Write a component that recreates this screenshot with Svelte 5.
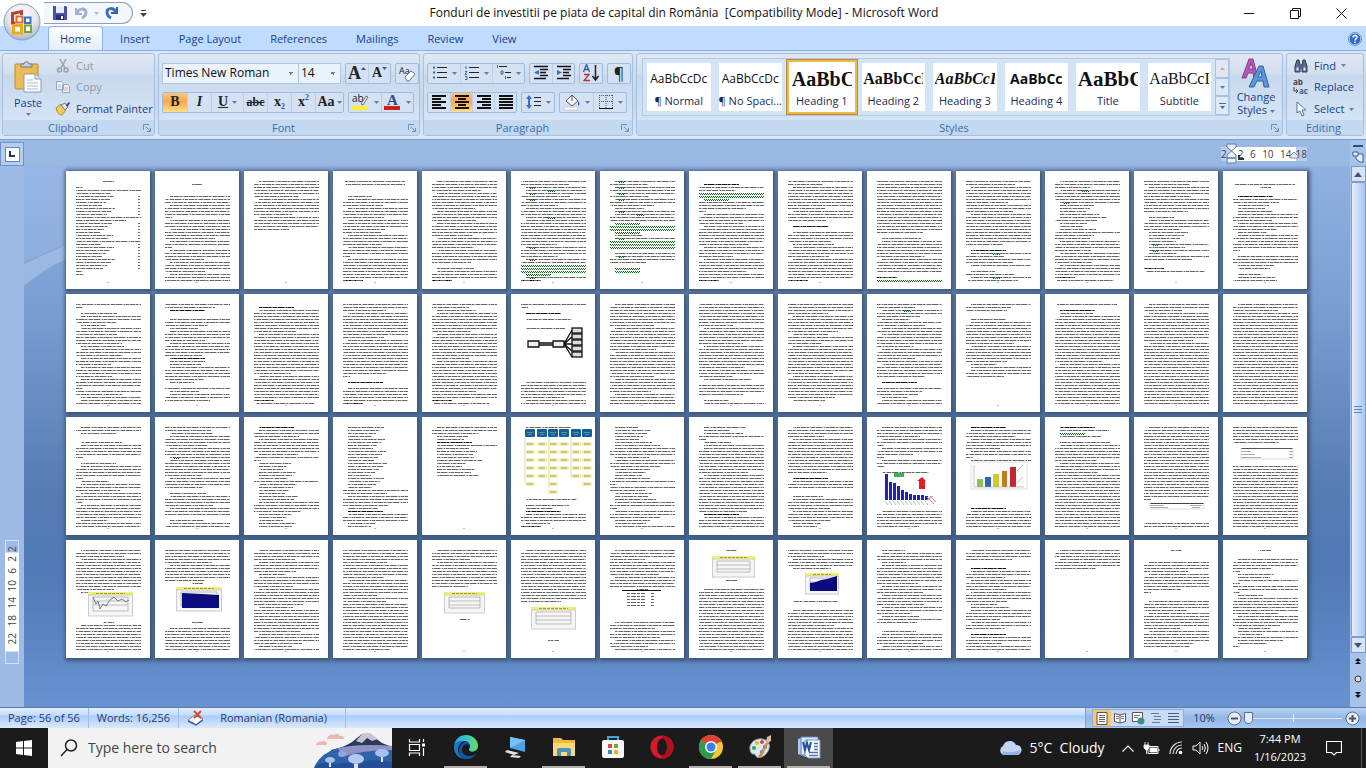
<script>
  let tab = $state('Home');
  let style = $state('Heading 1');
  let font = $state('Times New Roman');
  let size = $state('14');
  let zoom = $state(10);

  const tabs = ['Home', 'Insert', 'Page Layout', 'References', 'Mailings', 'Review', 'View'];

  const styles = [
    { name: 'Normal', mark: '¶ ', sample: 'AaBbCcDc', kind: 'sans' },
    { name: 'No Spaci...', mark: '¶ ', sample: 'AaBbCcDc', kind: 'sans' },
    { name: 'Heading 1', sample: 'AaBbC', kind: 'h1' },
    { name: 'Heading 2', sample: 'AaBbCcI', kind: 'h2' },
    { name: 'Heading 3', sample: 'AaBbCcI', kind: 'h3' },
    { name: 'Heading 4', sample: 'AaBbCc', kind: 'h4' },
    { name: 'Title', sample: 'AaBbC', kind: 'title' },
    { name: 'Subtitle', sample: 'AaBbCcI', kind: 'subtitle' },
  ];

  // One letter per text line:
  // f full, i indented, s short, t stub, m indented short, n list item, b bold heading,
  // c centred, d centred short, o contents entry, g/h wavy underline, u/v line with wavy word, r/k footnote
  const pages = [
    'd.tfsooooooofsoooooofooooooooott',
    '.d...iffiffftiffiffsiftiffsiffsiff',
    'iffffsiffffsifffs',
    'cc...nifsiffsiffssiffsifftiffffffrk',
    'iffsiffffsiffsifffsiffsifffs.niffrk',
    'fsuvusufsiffvifffffffsuffsufggghurk',
    'usufusufsnuvffhgghnuggg.iufs.hh',
    '.bfsgghffstiffsifffffsiffsifffsffrk',
    'fsiffffffsiffs.b.iffsmiffsiffffffrk',
    'fffffffffffffffffs.miffffsiffff.rgk',
    'fsiffffsffsifffffffffs.bvsfsi.nsvkk',
    'ifsvfffunnnnmsnnnfssiffsiffsifffrk',
    'fsiffsffffs.niffsnnnnununfs..rk',
    '.cd..bfsnnmifsifsnififft.iffnn.nnsrk',
    'ft.mifsnifsffsmifsifsiffsifftfsiifs',
    'fsb..ifsniffsifffsbnnifffsn.fnifs..rk',
    '.biffffffsiffffffffffffsifffffffrkk',
    'ffsifffffffsiffffffffffst.b.iffffrk',
    'fsnifffffsifffffffsifffffffffsffrk',
    'ft.b.m..n.................iffffsiffffrk',
    'iffffffsiffffffsifffffffsifffsifffffff',
    'fffffffsiffffsiffffffsffsm.fffs.nifffrk',
    'fffsiffffsnffsiffffffffsiffffffsn..frk',
    'fsvfsnfsififffsiffsfifffs.b.fssniffrg',
    'iss..niffffffsiffffsniifs',
    'c.bniffffffffffffffsiffffffffffffff',
    'ifsiffffffffsiffffffffffffffffffff',
    'ifsfffffffffffffffffffffffffffffff',
    'ifm..miffft.niffftnifsifftiffffnffsiff',
    'fsmiffsiffuiffffsiffs.niffsiff.niffsnrk',
    'bifsiffffmftnnnnnnfnnnnnniffsnnnnnnnnn',
    'nnnnnnnnnnnnnnnnnnnnnfsiffsnbiffnnm',
    'ifsnnbinmmnmnnnnm',
    'm.......................m.mnbiffnrk',
    'nnnnnnmiffnifsnnnmftfsnnmiftifsnniff',
    'mnnftniifffffffsifffffffffffsbiffffff',
    'iffsiffffffffffs.biff..niffsiffsnnrk',
    'iffsiftifstift.m............iffffs',
    'bifsiffsifti...............bifffffsnnn',
    'bmhm.miffffsiffsffffffffffffffffff',
    'iffffffffffffffffffffffft.......ffff',
    'fffffs.......ffffffffffffffffffffff',
    'ifsifffffffffsm.........diffffffffff',
    'ffffsiffffsd............d.ifffffffff',
    'iffsiffsniffsiffffsnfffffffsiffsnfff',
    'ffffsffffsiffffsfsfffffffffffffffs',
    'iffsifffffffs..........d',
    'iffffffffffffffffs.d..........d',
    'iffsffffsifffd..........ifsifsifsinfn',
    'd.........d..iffffffffffffffffffff',
    'ffsiffm..........m..iffffsffffffff',
    'niffnifffffsifsiffsifsnfs..niffsiff',
    'iffs..bifsiffsiffsnniffsifs.bifsffsiffs',
    'iffiffs',
    'd...iffsiffffst..iffsiffffsifffss',
    'd..iffstnnitfitniffffsiffsninfmnt',
  ];

  const figures = {
    19: 'tree', 33: 'org', 37: 'bars', 38: 'columns', 40: 'sheetLow', 41: 'sheet', 42: 'wave',
    43: 'area', 46: 'gridMid', 47: 'gridLow', 48: 'table', 49: 'gridTop', 50: 'areaSmall',
  };

  const spans = {
    f: [10, 75], i: [15, 75], s: [10, 52], t: [10, 17], m: [15, 58], n: [15, 46], b: [15, 50],
    c: [12, 72], d: [37, 48], o: [10, 42], g: [10, 75], h: [15, 40], u: [15, 75], v: [15, 75],
    r: [10, 30], k: [12, 64],
  };

  function rows(text, page) {
    const out = [];
    text.slice(0, 34).split('').forEach((kind, i) => {
      if (kind === '.') return;
      const [x1, end] = spans[kind];
      const jitter = 'smnko'.includes(kind) ? ((page * 7 + i * 13) % 17) - 8 : 0;
      out.push({ kind, x1, x2: end + jitter, y: 10.5 + i * 3, seed: (page * 5 + i * 11) % 31 });
    });
    return out;
  }
</script>

{#snippet arrow()}
  <svg class="arrow" width="5" height="3" viewBox="0 0 5 3"><path d="M0 0h5L2.5 3z" /></svg>
{/snippet}

{#snippet launcher()}
  <button class="launcher" aria-label="More options">
    <svg width="8" height="8" viewBox="0 0 8 8"><path d="M.5 6V.5H6M3 3l4 4M7.5 4v3.5H4" fill="none" stroke="#6b8fc0" /></svg>
  </button>
{/snippet}

{#snippet lines(d)}
  <svg width="16" height="16" viewBox="0 0 16 16"><path {d} stroke="#111" stroke-width="2" fill="none" /></svg>
{/snippet}

{#snippet squiggle(x1, x2, y)}
  <path class="squiggle" d="M{x1} {y}H{x2}M{x1 + 1} {y + 1}H{x2}" />
{/snippet}

{#snippet chart(x, y, w, h)}
  <rect {x} {y} width={w} height="3" fill="#f2ee6a" />
  <path d="M{x + 8} {y + 1.5}h{w - 16}" stroke="#8a8640" stroke-width=".8" stroke-dasharray="3 1" />
  <rect x={x + 0.5} y={y + 3} width={w - 1} height={h - 3} fill="#f6f6f6" stroke="#ccc" />
  <path d="M{x + 5} {y + 5}v{h - 10}h{w - 10}v-{h - 10}zM{x + 5} {y + 9}h{w - 10}M{x + 5} {y + 13}h{w - 10}" fill="none" stroke="#999" stroke-width=".6" />
{/snippet}

{#snippet figure(kind)}
  {#if kind === 'tree'}
    <path d="M17 47h11v6H17zM42 47h11v6H42zM28 49h14M28 51h14M53 50L61 36M53 50L61 43M53 50h8M53 50L61 57M53 50L61 63" fill="#eee" stroke="#111" stroke-width="1.3" />
    {#each [34, 40, 46, 52, 58] as y}
      <rect x="61" {y} width="10" height="5" fill="#ddd" stroke="#111" stroke-width="1.3" />
    {/each}
  {:else if kind === 'org'}
    <path d="M14 20v45M38 20v52M60 20v40" stroke="#bbb" stroke-width=".6" />
    {#each [14, 26, 37, 48, 60, 71] as x, c}
      <rect {x} y="12" width="10" height="8" rx="1" fill="#155f92" />
      <path d="M{x + 2} 15.5h6M{x + 3} 17.5h4" stroke="#6fa3c7" stroke-width=".7" />
      {#each [0, 1, 2, 3, 4, 5, 6] as r}
        {#if r < 4 || (r === 4 && c !== 3) || (r === 5 && (c === 0 || c === 2 || c === 5)) || (r === 6 && c === 2)}
          <rect {x} y={25 + r * 8} width="10" height="4" fill="#f4efad" />
          <path d="M{x + 2} {27 + r * 8}h6" stroke="#8d8a58" stroke-width=".8" />
        {/if}
      {/each}
    {/each}
  {:else if kind === 'bars'}
    {#each [26, 18, 17, 14, 10, 8, 6, 5, 5, 5, 4] as h, n}
      <rect x={18 + n * 4} y={83 - h} width="3" height={h} fill="#2424b4" />
      <path d="M{18 + n * 4} 84l3 4" stroke="#999" stroke-width=".7" />
    {/each}
    <rect x="27" y="56" width="10" height="4" fill="#32b35c" />
    <path d="M50 64l5-4 4 4h-1v8h-6v-8z" fill="#e02020" />
    <path d="M60 80l7 7M63 79l6 6M60 83l6-4" stroke="#c88" />
  {:else if kind === 'columns'}
    <rect x="15" y="45" width="56" height="27" fill="#fcfcfc" stroke="#ccc" stroke-width=".6" />
    <rect x="21" y="62" width="6" height="8" fill="#8fc24f" /><rect x="29" y="60" width="6" height="10" fill="#2f65b5" />
    <rect x="37" y="57" width="6" height="13" fill="#d8c52a" /><rect x="46" y="54" width="5" height="16" fill="#c07c22" />
    <rect x="54" y="50" width="6" height="20" fill="#c52530" />
    <path d="M18 48v22h50M61 54l6-6M61 66l6-6" stroke="#aaa" stroke-width=".6" fill="none" />
  {:else if kind === 'sheetLow'}
    <path d="M16 86.5h54" stroke="#444" /><path d="M16 88.5h14M16 90.5h18M56 88.5h12M58 90.5h8" stroke="#aaa" />
    <path d="M16 86v6h54v-6" fill="none" stroke="#ddd" />
  {:else if kind === 'sheet'}
    <path d="M18 31.5h52" stroke="#555" /><path d="M18 34.5h10M18 37.5h14M18 40.5h20M66 34.5h4M66 37.5h4M66 40.5h4" stroke="#aaa" />
    <path d="M18 31v11h52v-11" fill="none" stroke="#ddd" />
  {:else if kind === 'wave'}
    {@render chart(22, 52, 45, 24)}
    <path d="M27 57l3 7 2-3 2 8 3-5 3 2 4-6 4-3 4 4 4-2 4 3 3-2" fill="none" stroke="#6b7a94" />
  {:else if kind === 'area'}
    {@render chart(21, 47, 46, 24)}
    <path d="M27 53l20 1 17 1v13H27z" fill="#0b0b80" />
  {:else if kind === 'areaSmall'}
    {@render chart(27, 33, 34, 21)}
    <path d="M32 43l6-1 5-2 6-1 10-3v15H32z" fill="#0b0b80" />
  {:else if kind === 'gridMid'}
    {@render chart(22, 52, 41, 21)}
  {:else if kind === 'gridLow'}
    {@render chart(20, 67, 45, 22)}
  {:else if kind === 'gridTop'}
    {@render chart(23, 16, 43, 21)}
  {:else if kind === 'table'}
    <path d="M22 50.5h39" stroke="#111" />
    {#each [53.5, 56.5, 59.5, 62.5, 65.5] as y}
      <path d="M27 {y}h18M51 {y}h4" stroke="#666" stroke-dasharray="3 1 5 1" />
    {/each}
  {/if}
{/snippet}

<div class="window">
  <header class="titlebar">
    <button class="orb" aria-label="Office Button">
      <svg width="40" height="40" viewBox="0 0 40 40">
        <defs>
          <radialGradient id="orb" cx=".5" cy=".3" r=".7"><stop offset="0" stop-color="#fff" /><stop offset=".6" stop-color="#e3e6ec" /><stop offset="1" stop-color="#aab4c4" /></radialGradient>
        </defs>
        <circle cx="19" cy="19" r="18" fill="url(#orb)" stroke="#8c9db8" />
        <path d="M12.5 20H9.500V10.500L18.500 8.500V12" fill="none" stroke="#c0412a" stroke-width="3" />
        <path d="M13.500 13.500h6v6h-6z" fill="#fff" stroke="#de6a2c" stroke-width="2" />
        <path d="M22 14.500h5.500V20H22z" fill="#fff" stroke="#3a76b8" stroke-width="2" />
        <path d="M10.500 22.500h8v7.500h-8z" fill="#fff" stroke="#f0a91e" stroke-width="3" />
        <path d="M22 22.500h6V29h-6z" fill="#fff" stroke="#7aa33a" stroke-width="2" />
      </svg>
    </button>
    <div class="quick">
      <button aria-label="Save"><svg width="16" height="16" viewBox="0 0 16 16"><path d="M1 1h13l1 1v13H1z" fill="#4a52a8" /><path d="M4 1h8v7H4z" fill="#e8ecfb" /><path d="M4 10h8v5H4z" fill="#2b3078" /><path d="M9 11h2v3H9z" fill="#fff" /></svg></button>
      <button aria-label="Undo"><svg width="16" height="16" viewBox="0 0 16 16"><path d="M3 3v6h6" fill="none" stroke="#a3b2cc" stroke-width="2" /><path d="M4 8c2-5 8-5 9-1 0 3-2 5-4 6" fill="none" stroke="#a3b2cc" stroke-width="3" /></svg></button>
      <span class="faint">{@render arrow()}</span>
      <button aria-label="Redo"><svg width="16" height="16" viewBox="0 0 16 16"><path d="M13 2v6H7" fill="none" stroke="#2f62ad" stroke-width="2" /><path d="M12 7C9 2 3 3 3 7c0 3 2 5 4 6" fill="none" stroke="#3c6fb6" stroke-width="3" /></svg></button>
    </div>
    <button class="customize" aria-label="Customize Quick Access Toolbar"><svg width="7" height="7" viewBox="0 0 7 7"><path d="M1 0h5v1H1zM0 3h7L3.500 7z" fill="#444" /></svg></button>
    <h1>Fonduri de investitii pe piata de capital din România&nbsp; [Compatibility Mode] - Microsoft Word</h1>
    <div class="controls">
      <button aria-label="Minimize"><svg width="11" height="11" viewBox="0 0 11 11"><path d="M0 5.500h10" stroke="#111" /></svg></button>
      <button aria-label="Restore"><svg width="11" height="11" viewBox="0 0 11 11"><path d="M.5 2.500h8v8h-8zM2.500 2.500v-2h8v8h-2" fill="none" stroke="#111" /></svg></button>
      <button aria-label="Close"><svg width="11" height="11" viewBox="0 0 11 11"><path d="M.5.5l10 10M10.500.5l-10 10" stroke="#111" /></svg></button>
    </div>
  </header>

  <nav class="tabs">
    {#each tabs as name}
      <button class:active={tab === name} onclick={() => (tab = name)}>{name}</button>
    {/each}
    <button class="help" aria-label="Help">
      <svg width="14" height="14" viewBox="0 0 14 14"><circle cx="7" cy="7" r="6" fill="#2e6bc4" stroke="#dbe8fb" /><circle cx="7" cy="7" r="6.500" fill="none" stroke="#4a7cc0" stroke-width=".8" /><path d="M5 5.500c0-3 4.500-2.500 4 0-.3 1.300-2 1.300-2 3M7 9.500v1.500" stroke="#fff" stroke-width="1.500" fill="none" /></svg>
    </button>
  </nav>

  <div class="ribbon">
    <section class="group clipboard">
      <div class="body">
        <button class="paste">
          <svg width="28" height="32" viewBox="0 0 28 32">
            <rect x="1" y="3" width="23" height="25" rx="1" fill="#e9bc57" stroke="#b98a35" />
            <path d="M7 6V3h3c0-3 5-3 5 0h3v3z" fill="#c9d0da" stroke="#6c7686" />
            <path d="M10 13h11l6 5v13H10z" fill="#fff" stroke="#8c9bb5" /><path d="M21 13v5h6" fill="#dfe7f3" stroke="#8c9bb5" />
            <path d="M13 19h6M13 22h11M13 25h11M13 28h11" stroke="#a9b8d2" />
          </svg>
          <span>Paste</span>
          {@render arrow()}
        </button>
        <div class="stack">
          <button disabled><svg width="16" height="16" viewBox="0 0 16 16"><path d="M5 1l5 9M11 1L6 10" stroke="#9aa0aa" stroke-width="1.500" /><circle cx="4.500" cy="12" r="2" fill="none" stroke="#9aa0aa" stroke-width="1.500" /><circle cx="11" cy="12" r="2" fill="none" stroke="#9aa0aa" stroke-width="1.500" /></svg>Cut</button>
          <button disabled><svg width="16" height="16" viewBox="0 0 16 16"><path d="M1.500 2.500h5l2 2v6h-7zM7.500 5.500h5l2 2v6h-7z" fill="#eef1f6" stroke="#9aa6b8" /><path d="M9 9h4M9 11h4M3 6h3M3 8h3" stroke="#b4bccb" /></svg>Copy</button>
          <button><svg width="16" height="16" viewBox="0 0 16 16"><path d="M1 7l5-4 5 6-4 5c-3 0-4-1-6-7z" fill="#f1cb5a" stroke="#b68a2c" /><path d="M6 4l4 5 3-3-3-4z" fill="#dfe5ee" stroke="#707c90" /><path d="M11 4l3-3 1 1-3 4z" fill="#34436a" /></svg>Format Painter</button>
        </div>
      </div>
      <footer><span>Clipboard</span>{@render launcher()}</footer>
    </section>

    <section class="group font">
      <div class="body rows">
        <div class="row">
          <div class="combos">
            <select class="family" aria-label="Font" bind:value={font}><option>Times New Roman</option><option>Calibri</option></select>
            <select class="size" aria-label="Font size" bind:value={size}><option>14</option><option>12</option></select>
          </div>
          <div class="set">
            <button class="serif big" aria-label="Grow Font">A<svg width="5" height="3" viewBox="0 0 5 3"><path d="M0 3h5L2.500 0z" fill="#2f57a6" /></svg></button>
            <button class="serif" aria-label="Shrink Font">A<svg width="5" height="3" viewBox="0 0 5 3"><path d="M0 0h5L2.500 3z" fill="#2f57a6" /></svg></button>
          </div>
          <div class="set">
            <button aria-label="Clear Formatting"><svg width="18" height="17" viewBox="0 0 18 17"><text x="1" y="9" font-size="9" fill="#222">Aa</text><path d="M7 12l6-6 4 3-6 7H9z" fill="#fff" stroke="#67748c" /></svg></button>
          </div>
        </div>
        <div class="row">
          <div class="set">
            <button class="serif on wide"><b>B</b></button>
            <button class="serif wide"><i>I</i></button>
            <button class="serif drop"><u>U</u>{@render arrow()}</button>
            <button class="serif wide small"><s>abc</s></button>
            <button class="serif wide">x<sub>2</sub></button>
            <button class="serif wide">x<sup>2</sup></button>
            <button class="serif drop tight">Aa{@render arrow()}</button>
          </div>
          <div class="set">
            <button class="drop" aria-label="Highlight"><svg width="18" height="18" viewBox="0 0 18 18"><text x="0" y="9" font-size="10" fill="#222">ab</text><path d="M9 11l5-8 2 1-5 8z" fill="#e8edf5" stroke="#555" stroke-width=".8" /><path d="M0 13h16v4H0z" fill="#ffee2e" /></svg>{@render arrow()}</button>
            <button class="drop" aria-label="Font Color"><svg width="18" height="18" viewBox="0 0 18 18"><text class="tserif" x="3" y="12" font-size="15" font-weight="bold" fill="#2c4a8a">A</text><path d="M0 13h16v4H0z" fill="#d11d1d" /></svg>{@render arrow()}</button>
          </div>
        </div>
      </div>
      <footer><span>Font</span>{@render launcher()}</footer>
    </section>

    <section class="group paragraph">
      <div class="body rows">
        <div class="row">
          <div class="set">
            <button class="drop" aria-label="Bullets"><svg width="16" height="16" viewBox="0 0 16 16"><path d="M1 2.500h2M1 7.500h2M1 12.500h2" stroke="#3e62a8" stroke-width="2" /><path d="M5 2.500h10M5 7.500h10M5 12.500h10" stroke="#222" /></svg>{@render arrow()}</button>
            <button class="drop" aria-label="Numbering"><svg width="16" height="16" viewBox="0 0 16 16"><path d="M2 1v3M1 6.500h2l-2 3h2M1 11.500h2v3H1" stroke="#3e62a8" fill="none" /><path d="M5 2.500h10M5 7.500h10M5 12.500h10" stroke="#222" /></svg>{@render arrow()}</button>
            <button class="drop" aria-label="Multilevel List"><svg width="16" height="16" viewBox="0 0 16 16"><path d="M1.500 0v3M5 6h2v3H5zM9.500 11v3" stroke="#3e62a8" fill="none" /><path d="M3 1.500h8M9 7.500h6M11 12.500h4" stroke="#222" /></svg>{@render arrow()}</button>
          </div>
          <div class="set">
            <button aria-label="Decrease Indent"><svg width="16" height="16" viewBox="0 0 16 16"><path d="M1 1.500h14M7 4.500h8M7 7.500h6M7 10.500h8M1 13.500h12" stroke="#111" stroke-width="1.500" /><path d="M6 5v5L1 7.500z" fill="#3e6cc4" /></svg></button>
            <button aria-label="Increase Indent"><svg width="16" height="16" viewBox="0 0 16 16"><path d="M1 1.500h14M7 4.500h8M7 7.500h6M7 10.500h8M1 13.500h12" stroke="#111" stroke-width="1.500" /><path d="M1 5v5l5-2.500z" fill="#3e6cc4" /></svg></button>
          </div>
          <div class="set">
            <button aria-label="Sort"><svg width="18" height="18" viewBox="0 0 18 18"><path d="M1.500 8L4.500.5 7.500 8M2.500 5.500h4" fill="none" stroke="#2f57a6" stroke-width="1.300" /><path d="M2 10.500h5L2 16.500h6" fill="none" stroke="#b5302f" stroke-width="1.300" /><path d="M13.500 1v14M10.500 12l3 4 3-4" stroke="#222" stroke-width="1.500" fill="none" /></svg></button>
          </div>
          <div class="set"><button class="pil" aria-label="Show marks">¶</button></div>
        </div>
        <div class="row">
          <div class="set">
            <button aria-label="Align Left">{@render lines('M1 2h14M1 5h9M1 8h14M1 11h9M1 14h14')}</button>
            <button class="on" aria-label="Center">{@render lines('M1 2h14M4 5h8M1 8h14M4 11h8M1 14h14')}</button>
            <button aria-label="Align Right">{@render lines('M1 2h14M6 5h9M1 8h14M6 11h9M1 14h14')}</button>
            <button aria-label="Justify">{@render lines('M1 2h14M1 5h14M1 8h14M1 11h14M1 14h14')}</button>
          </div>
          <div class="set">
            <button class="drop" aria-label="Line Spacing"><svg width="16" height="16" viewBox="0 0 16 16"><path d="M0 5l3-4 3 4zM0 11l3 4 3-4zM2 5h2v6H2z" fill="#3e6cc4" /><path d="M8 3.500h7M8 7.500h7M8 11.500h7" stroke="#222" /></svg>{@render arrow()}</button>
          </div>
          <div class="set">
            <button class="drop wider" aria-label="Shading"><svg width="18" height="18" viewBox="0 0 18 18"><path d="M3 8l6-6 6 6-6 5z" fill="#f3f6fb" stroke="#555" /><path d="M9 2v6" stroke="#555" /><path d="M15 8c2 2 2 4 0 5z" fill="#2f57a6" /><path d="M1 14h14v3H1z" fill="#fff" stroke="#ccc" /></svg>{@render arrow()}</button>
            <button class="drop wider" aria-label="Borders"><svg width="16" height="16" viewBox="0 0 16 16"><path d="M1.500 1v13M14.500 1v13M8 1v13M1 1.500h14M1 7.500h14" stroke="#556" stroke-dasharray="1 1" /><path d="M1 14.500h14" stroke="#111" /></svg>{@render arrow()}</button>
          </div>
        </div>
      </div>
      <footer><span>Paragraph</span>{@render launcher()}</footer>
    </section>

    <section class="group styles">
      <div class="body">
        <div class="gallery">
          {#each styles as s}
            <button class="card" class:picked={style === s.name} onclick={() => (style = s.name)}>
              <span class="sample {s.kind}">{s.sample}</span>
              <span class="name">{s.mark ?? ''}{s.name}</span>
            </button>
          {/each}
          <div class="scroller">
            <button class="off" aria-label="Previous row"><svg width="5" height="3" viewBox="0 0 5 3"><path d="M0 3h5L2.500 0z" fill="#a9b4c6" /></svg></button>
            <button aria-label="Next row">{@render arrow()}</button>
            <button aria-label="More styles"><svg width="7" height="6" viewBox="0 0 7 6"><path d="M0 0h7v1H0zM1 3h5L3.500 6z" fill="#4b6998" /></svg></button>
          </div>
        </div>
        <button class="change">
          <svg width="30" height="30" viewBox="0 0 30 30"><path d="M1 20L8 1h4l5 19h-4l-1-5H7l-2 5zM8 11h4L10 5z" fill="#b558b4" stroke="#8d3c90" /><path d="M8 29L18 8h4l6 21h-5l-1-6h-6l-3 6zM17 19h4l-1-6z" fill="#5d95d8" stroke="#2e62a5" /></svg>
          <span>Change<br />Styles {@render arrow()}</span>
        </button>
      </div>
      <footer><span>Styles</span>{@render launcher()}</footer>
    </section>

    <section class="group editing">
      <div class="body">
        <div class="stack">
          <button><svg width="16" height="16" viewBox="0 0 16 16"><path d="M2 8l2-6h2l1 5h2l1-5h2l2 6v6H9v-4H7v4H2z" fill="#5a6b8c" stroke="#2d3d60" /><path d="M3.500 9.500h2v3h-2zM10.500 9.500h2v3h-2z" fill="#dbe5f5" /></svg>Find {@render arrow()}</button>
          <button><svg width="16" height="16" viewBox="0 0 16 16"><text x="0" y="6" font-size="8" font-weight="bold" fill="#444">ab</text><text x="6" y="15" font-size="8" font-weight="bold" fill="#3a5f8c">ac</text><path d="M1 8v4h4M3 10l2 2-2 2" stroke="#444" fill="none" /></svg>Replace</button>
          <button><svg width="16" height="16" viewBox="0 0 16 16"><path d="M4 1v11l3-2 2 5 2-1-2-5h4z" fill="#fff" stroke="#556b90" /></svg>Select {@render arrow()}</button>
        </div>
      </div>
      <footer><span>Editing</span></footer>
    </section>
  </div>

  <main class="workspace">
    <div class="side">
      <button class="corner" aria-label="Tab selector"><span><svg width="6" height="6" viewBox="0 0 6 6"><path d="M1 0v5h5" fill="none" stroke="#1f3864" stroke-width="2" /></svg></span></button>
      <div class="vruler">
        <span class="edge">2</span>
        <div class="white"><span>2</span><span>6</span><span>10</span><span>14</span><span>18</span><span>22</span></div>
        <span class="edge"></span>
      </div>
    </div>

    <div class="center">
      <div class="hruler">
        <div class="scale">
          <span>2</span><span class="white"><span>2</span><span>6</span><span>10</span><span>14</span></span><span>18</span>
          <svg class="markers" width="86" height="22" viewBox="0 0 86 22"><path d="M6 1h9v3l-9 8v3h9v-3L6 4zM6 15h9v5H6z" fill="#eef3fb" stroke="#5e79a6" /><path d="M18 12v4h5" fill="none" stroke="#333" stroke-width="2" /><path d="M69 15v-2l4-4 4 4v2z" fill="#eef3fb" stroke="#7e8fae" /></svg>
        </div>
      </div>
      <div class="document">
        <svg class="swirl" width="42" height="160" viewBox="0 0 42 160" aria-hidden="true"><path d="M0 0h42v78L0 96z" fill="#a9c5ea" opacity=".3" /><path d="M0 98L42 79v14Q18 104 0 120z" fill="#c0d6f3" opacity=".4" /></svg>
        <div class="pages">
          {#each pages as text, p}
            <svg class="page" viewBox="0 0 84 118" role="img" aria-label="Page {p + 1}">
              {#each rows(text, p) as l}
                {#if l.kind === 'g' || l.kind === 'h'}
                  {@render squiggle(l.x1, l.x2, l.y)}
                {:else}
                  <path class="ink {l.kind}" d="M{l.x1} {l.y}H{l.x2}" />
                  <path class="text {l.kind}" d="M{l.x1} {l.y}H{l.x2}" stroke-dashoffset={l.seed} />
                  {#if l.kind === 'u'}
                    {@render squiggle(18, 25, l.y)}
                  {:else if l.kind === 'v'}
                    {@render squiggle(36, 44, l.y)}
                  {:else if l.kind === 'o'}
                    <path class="text" d="M72 {l.y}h2" />
                  {/if}
                {/if}
              {/each}
              {#if figures[p]}{@render figure(figures[p])}{/if}
              <path d="M41 111.500h2" stroke="#bbb" />
            </svg>
          {/each}
        </div>
      </div>
    </div>

    <div class="scrollbar">
      <span class="split"></span>
      <button class="toggle" aria-label="View Ruler"><svg width="12" height="12" viewBox="0 0 12 12"><path d="M1 1h5v4H1zM6 3h5v8H8l-4-3V5" fill="#e8effa" stroke="#3d5f94" /></svg></button>
      <button class="step" aria-label="Scroll up"><svg width="8" height="5" viewBox="0 0 8 5"><path d="M0 5h8L4 0z" fill="#3e5379" /></svg></button>
      <div class="thumb"><svg width="8" height="8" viewBox="0 0 8 8"><path d="M0 .5h8M0 3.500h8M0 6.500h8" stroke="#5f86c0" /></svg></div>
      <button class="step" aria-label="Scroll down"><svg width="8" height="5" viewBox="0 0 8 5"><path d="M0 0h8L4 5z" fill="#3e5379" /></svg></button>
      <button class="browse" aria-label="Previous page"><svg width="6" height="7" viewBox="0 0 6 7"><path d="M3 0l3 3H0zM3 3l3 3H0z" fill="#111" /></svg></button>
      <button class="browse" aria-label="Browse object"><svg width="8" height="8" viewBox="0 0 8 8"><circle cx="4" cy="4" r="3" fill="#ddd" stroke="#333" /></svg></button>
      <button class="browse" aria-label="Next page"><svg width="6" height="7" viewBox="0 0 6 7"><path d="M0 0h6L3 3zM0 3h6L3 6z" fill="#111" /></svg></button>
    </div>
  </main>

  <div class="status">
    <button class="cell">Page: 56 of 56</button>
    <button class="cell">Words: 16,256</button>
    <button class="cell lang">
      <svg width="17" height="16" viewBox="0 0 17 16"><path d="M1 10l7-5 8 4-7 6z" fill="#f7f9fd" stroke="#6a7fae" /><path d="M1 11l8 4 7-5" fill="none" stroke="#4660a0" stroke-width="1.500" /><path d="M7 1l7 7M14 1L7 8" stroke="#d9482e" stroke-width="2" /></svg>
      Romanian (Romania)
    </button>
    <div class="right">
      <div class="views">
        <button class="on" aria-label="Print Layout"><svg width="12" height="13" viewBox="0 0 12 13"><path d="M1 .5h10v12H1z" fill="#fff" stroke="#555" /><path d="M3 3.500h6M3 5.500h6M3 7.500h6M3 9.500h6" stroke="#666" /></svg></button>
        <button aria-label="Full Screen Reading"><svg width="12" height="12" viewBox="0 0 12 12"><path d="M.5 1.500L6 3l5.500-1.500v8L6 11 .5 9.500zM6 3v8" fill="#fff" stroke="#555" /><path d="M2 4.500h3M2 6.500h3M7 4.500h3M7 6.500h3" stroke="#777" /></svg></button>
        <button aria-label="Web Layout"><svg width="13" height="13" viewBox="0 0 13 13"><path d="M.5.5h10v9H.5z" fill="#fff" stroke="#555" /><path d="M2 3.500h6M2 5.500h4" stroke="#777" /><circle cx="9" cy="9" r="3.500" fill="#3f8d8d" /></svg></button>
        <button aria-label="Outline"><svg width="12" height="12" viewBox="0 0 12 12"><path d="M1 1.500h8M4 4.500h7M4 7.500h7M2 10.500h8" stroke="#667a9c" /></svg></button>
        <button aria-label="Draft"><svg width="12" height="12" viewBox="0 0 12 12"><path d="M0 1.500h11M0 4.500h11M0 7.500h11M0 10.500h11" stroke="#4c5d7c" /></svg></button>
      </div>
      <button class="percent">{zoom}%</button>
      <button class="round" aria-label="Zoom out"><svg width="15" height="15" viewBox="0 0 15 15"><circle cx="7.500" cy="7.500" r="6.500" fill="#e9eff8" stroke="#556b90" /><path d="M4 7.500h7" stroke="#44546f" stroke-width="2" /></svg></button>
      <input type="range" min="10" max="500" bind:value={zoom} aria-label="Zoom" />
      <button class="round" aria-label="Zoom in"><svg width="15" height="15" viewBox="0 0 15 15"><circle cx="7.500" cy="7.500" r="6.500" fill="#e9eff8" stroke="#556b90" /><path d="M4 7.500h7M7.500 4v7" stroke="#44546f" stroke-width="2" /></svg></button>
    </div>
  </div>

  <div class="taskbar">
    <button class="start" aria-label="Start"><svg width="16" height="16" viewBox="0 0 16 16"><path d="M0 2l7-1v6.500H0zM8 1l8-1v7.500H8zM0 8.500h7V15l-7-1zM8 8.500h8V16l-8-1z" fill="#fff" /></svg></button>
    <label class="search">
      <svg width="18" height="18" viewBox="0 0 18 18"><circle cx="11" cy="6.500" r="5.500" fill="none" stroke="#222" stroke-width="1.500" /><path d="M7 10.500L1 17" stroke="#222" stroke-width="1.500" /></svg>
      <input type="text" placeholder="Type here to search" aria-label="Type here to search" />
      <svg class="art" width="78" height="36" viewBox="0 0 78 36">
        <path d="M2 12q3-4 6-2 2-3 5 1v2H2zM13 6q3-5 7-3 4-3 6 1 4-1 4 3H13z" fill="#e9b9b6" />
        <path d="M17 18q14-3 21-8L48 2h8l12 9 10 4v12H20z" fill="#2b3957" />
        <path d="M42 9l7-8h7l8 6-6 2-5-3-5 5z" fill="#c9c4d6" />
        <path d="M0 36Q5 22 24 16q24-5 54-2v22z" fill="#2e62ab" />
        <path d="M24 16q24-5 54-2v4q-30 0-50 7z" fill="#8f92c4" />
        <path d="M0 36q8-8 20-4l40-4 18 2v6z" fill="#244f95" />
        <ellipse cx="42" cy="27" rx="8" ry="5" fill="#b3c9f2" /><ellipse cx="68" cy="21" rx="7" ry="4" fill="#a9c0ee" /><ellipse cx="16" cy="28" rx="5" ry="3" fill="#a9c0ee" /><ellipse cx="28" cy="22" rx="4" ry="3" fill="#8ea9dc" />
        <path d="M40 32h4v4h-4zM67 25h2v5h-2zM15 31h2v4h-2z" fill="#dce6fb" />
      </svg>
    </label>
    <button class="app" aria-label="Task View"><svg width="18" height="17" viewBox="0 0 18 17"><path d="M1.500 0v3h10V0M1.500 17v-3h10v3M1.500 5.500h10v6h-10z" fill="none" stroke="#fff" stroke-width="1.200" /><path d="M15.500 0v3M15.500 9v8" stroke="#fff" stroke-width="1.200" /><path d="M14 4.500h3v3h-3z" fill="#fff" /></svg></button>
    <button class="app open" aria-label="Edge">
      <svg width="26" height="26" viewBox="0 0 26 26">
        <defs>
          <linearGradient id="edge-top" x1="0" x2="1"><stop offset="0" stop-color="#2aa0e0" /><stop offset=".5" stop-color="#36c3d0" /><stop offset="1" stop-color="#6bdc5a" /></linearGradient>
        </defs>
        <path d="M1 12C2 4 8 1 13 1c8 0 12 6 12 11 0 6-8 7-9 4-.4-1 1-2 1-4 0-3-3-5-6-5C6 7 2 9 1 12z" fill="url(#edge-top)" />
        <path d="M1 12c1-3 5-5 10-5-6 3-8 9-4 14 2 3 5 4 8 4C6 26 0 19 1 12z" fill="#1b78cc" />
        <path d="M11 11c-4 4-2 11 5 11 3 0 5-1 7-2-5 8-16 6-17-3 0-4 2-8 7-9 2 0 4 2 4 4-2-2-4-2-6-1z" fill="#0f57a6" />
      </svg>
    </button>
    <button class="app" aria-label="Remote Desktop"><svg width="24" height="24" viewBox="0 0 24 24"><path d="M7 2l15 3v12L7 13z" fill="#4aa3e6" /><path d="M7 2l15 3-15 8z" fill="#78c2f5" /><path d="M4 15l12 3-5 2-9-3zM9 20l9 1-2 2-9-1z" fill="#dfe3e8" /></svg></button>
    <button class="app open" aria-label="File Explorer"><svg width="24" height="22" viewBox="0 0 24 22"><path d="M1 2h8l2 2h12v16H1z" fill="#f0b93a" /><path d="M1 7h22v13H1z" fill="#fbd978" /><path d="M5 20v-6q0-2 2-2h10q2 0 2 2v6h-4v-4H9v4z" fill="#4a93b8" /></svg></button>
    <button class="app" aria-label="Microsoft Store"><svg width="24" height="24" viewBox="0 0 24 24"><path d="M7 6V2h10v4" fill="none" stroke="#38a7dc" stroke-width="2" /><rect x="1" y="5" width="22" height="18" rx="2" fill="#f6f7f9" /><path d="M7 9h4v4H7z" fill="#d9512c" /><path d="M13 9h4v4h-4z" fill="#74a53a" /><path d="M7 15h4v4H7z" fill="#2f86cf" /><path d="M13 15h4v4h-4z" fill="#e8af24" /></svg></button>
    <button class="app" aria-label="Opera"><svg width="24" height="24" viewBox="0 0 24 24"><circle cx="12" cy="12" r="11.500" fill="#d8192a" /><path d="M12 .5a11.500 11.500 0 010 23z" fill="#b01020" /><ellipse cx="12" cy="12" rx="5" ry="8.500" fill="#1b1b1b" /></svg></button>
    <button class="app open" aria-label="Chrome"><svg width="24" height="24" viewBox="0 0 24 24"><circle cx="12" cy="12" r="12" fill="#f7c92e" /><path d="M12 12L1.600 6A12 12 0 0122.400 6z" fill="#dd4234" /><path d="M12 12L1.600 6A12 12 0 0012 24l5-9z" fill="#2c9c4c" /><path d="M12 6h10.400" stroke="#dd4234" stroke-width="2" /><circle cx="12" cy="12" r="6" fill="#fff" /><circle cx="12" cy="12" r="4.500" fill="#3c7fe8" /></svg></button>
    <button class="app open" aria-label="Paint"><svg width="24" height="24" viewBox="0 0 24 24"><path d="M2 14C1 8 8 3 14 4c7 1 9 7 6 12-4 7-11 8-12 5-1-4-5 1-6-7z" fill="#dbe7f3" stroke="#97aabf" /><circle cx="6" cy="13" r="2" fill="#37a04c" /><circle cx="9" cy="8" r="2" fill="#e8b622" /><circle cx="14" cy="7" r="2" fill="#d84832" /><circle cx="17" cy="12" r="2" fill="#6a4fb5" /><circle cx="14" cy="17" r="2" fill="#2e7fd1" /><path d="M10 22l9-16 2 1-8 16z" fill="#c98e4b" /><path d="M18 7l1-5 4-2v6l-3 2z" fill="#d9bb97" /></svg></button>
    <button class="app open current" aria-label="Word"><svg width="24" height="24" viewBox="0 0 24 24"><path d="M1 4l8-2v20l-8-3z" fill="#b6c9ea" /><path d="M4 2h17v18H4z" fill="#dfe9f8" stroke="#5c82c4" /><path d="M8 5h15v18H11l-3-3z" fill="#fff" stroke="#6f8fc8" /><path d="M17 8.500h4M17 11.500h4M17 14.500h4M12 17.500h9M12 20.500h9" stroke="#4a70b8" stroke-width="1.500" /><path d="M6 7l2 8 2-7 2 7 2-8" fill="none" stroke="#24509f" stroke-width="2" /></svg></button>
    <div class="tray">
      <button class="weather"><svg width="24" height="16" viewBox="0 0 24 16"><path d="M5 15a5 5 0 010-9 7 7 0 0113-1 5 5 0 011 10z" fill="#c3d4f2" /><path d="M5 15a4 4 0 010-4q8 3 17-1c1 3-1 5-3 5z" fill="#93b3e8" /></svg><span>5°C&nbsp; Cloudy</span></button>
      <button aria-label="Show hidden icons"><svg width="12" height="7" viewBox="0 0 12 7"><path d="M.5 6.500L6 1l5.500 5.500" fill="none" stroke="#fff" stroke-width="1.200" /></svg></button>
      <button aria-label="Battery"><svg width="17" height="13" viewBox="0 0 17 13"><path d="M5 4.500h10v7H5zM16 7v2" fill="none" stroke="#fff" /><path d="M7 6h7v4H7zM1 3h5v3L4 8H3L1 6zM2 0v3M5 0v3M3.500 8v4" fill="#fff" stroke="#fff" stroke-width=".8" /></svg></button>
      <button aria-label="Network"><svg width="14" height="14" viewBox="0 0 14 14"><path d="M1 13A12 12 0 0113 1M4 13a9 9 0 019-9M7 13a6 6 0 016-6" fill="none" stroke="#ddd" stroke-width="1.200" /><circle cx="11.500" cy="11.500" r="1.800" fill="#fff" /></svg></button>
      <button aria-label="Volume"><svg width="17" height="14" viewBox="0 0 17 14"><path d="M1 5h3l4-4v12L4 9H1zM10 5q2 2 0 4M12 3q3 4 0 8M14 1q4 6 0 12" fill="none" stroke="#fff" /></svg></button>
      <button class="eng">ENG</button>
      <button class="clock">7:44 PM<br />1/16/2023</button>
      <button class="note" aria-label="Notifications"><svg width="16" height="16" viewBox="0 0 16 16"><path d="M.5 1.500h15v11h-5L8 15l-2.500-2.500h-5z" fill="none" stroke="#fff" stroke-width="1.200" /></svg></button>
    </div>
  </div>
</div>

<style>
  :global(body) {
    margin: 0;
  }
  .window {
    min-height: 100vh;
    display: grid;
    grid-template-rows: 26px 24px 90px 1fr 21px 40px;
    font: 11px/16px 'Open Sans', 'Noto Sans', sans-serif;
    color: #15428b;
    background: #bfdbff;
    overflow: hidden;
  }
  button {
    font: inherit;
    color: inherit;
    border: 0;
    padding: 0;
    background: none;
    display: flex;
    align-items: center;
    justify-content: center;
    white-space: nowrap;
  }
  svg {
    display: block;
    flex: none;
  }
  .arrow {
    fill: #5d7fae;
  }

  .titlebar {
    position: relative;
    display: flex;
    align-items: center;
    padding-left: 44px;
    background: #fff;
  }
  .orb {
    position: absolute;
    left: 3px;
    top: 3px;
    z-index: 2;
  }
  .quick {
    display: flex;
    align-items: center;
    gap: 5px;
    height: 22px;
    padding: 0 12px 0 8px;
    border: 1px solid #8ba0bf;
    border-left: 0;
    border-radius: 0 12px 12px 0;
    box-sizing: border-box;
    background: #f4f8fe;
  }
  .faint {
    opacity: 0.5;
  }
  .customize {
    padding: 0 7px;
  }
  h1 {
    flex: 1;
    margin: 0;
    padding-right: 12px;
    font-size: 12px;
    font-weight: 400;
    color: #111;
    text-align: center;
    white-space: nowrap;
  }
  .controls {
    display: flex;
    padding-right: 2px;
  }
  .controls button {
    width: 46px;
    height: 26px;
  }

  .tabs {
    display: flex;
    align-items: stretch;
    padding-left: 48px;
  }
  .tabs button {
    padding: 0 11px;
    margin-right: 5px;
    border: 1px solid transparent;
    border-bottom: 0;
  }
  .tabs .active {
    background: linear-gradient(#fff, #e3edfa);
    border-color: #8db2e3;
    border-radius: 4px 4px 0 0;
  }
  .tabs .help {
    margin: 0 3px 0 auto;
    padding: 0;
  }

  .ribbon {
    display: flex;
    gap: 3px;
    padding: 2px 2px 3px;
    box-sizing: border-box;
    border-top: 1px solid #8db2e3;
    border-bottom: 1px solid #7ba0d0;
    background: linear-gradient(#dbe6f4, #cfdded 20%, #c7d8ed 60%, #d9e8f8);
  }
  .group {
    display: flex;
    flex-direction: column;
    box-sizing: border-box;
    border: 1px solid #a6c0e0;
    border-radius: 3px;
    background: linear-gradient(#dfe8f4, #d2deee 25%, #c9d9ed 26%, #d8e6f8);
  }
  .group .body {
    flex: 1;
    display: flex;
  }
  .group footer {
    display: flex;
    align-items: center;
    height: 15px;
    padding-right: 3px;
    background: #c2d9f0;
    color: #3e6aaa;
  }
  .group footer span {
    flex: 1;
    text-align: center;
  }
  .clipboard { width: 153px; }
  .font { width: 262px; }
  .paragraph { width: 210px; }
  .styles { flex: 1; min-width: 0; }
  .editing { width: 78px; }

  .paste {
    flex-direction: column;
    width: 50px;
    gap: 2px;
    padding-top: 2px;
  }
  .stack {
    display: flex;
    flex-direction: column;
    justify-content: space-around;
    padding: 1px 0 0;
  }
  .stack button {
    gap: 5px;
    justify-content: flex-start;
    height: 20px;
  }
  .stack button:disabled {
    color: #8d97a6;
  }
  .clipboard .stack { padding-left: 2px; }
  .editing .stack { padding-left: 6px; }

  .rows {
    flex-direction: column;
    justify-content: center;
    gap: 8px;
    padding: 1px 3px 0;
  }
  .row {
    display: flex;
    gap: 4px;
  }
  .combos {
    display: flex;
  }
  select {
    appearance: none;
    box-sizing: border-box;
    height: 21px;
    padding: 0 2px;
    border: 1px solid #b0c6e4;
    border-radius: 0;
    font: inherit;
    font-size: 12px;
    color: #111;
    background:
      linear-gradient(135deg, #5d7fae 50%, transparent 50%) right 4px center / 3px 3px no-repeat,
      linear-gradient(225deg, #5d7fae 50%, transparent 50%) right 7px center / 3px 3px no-repeat,
      #eaf2fb;
  }
  .family { width: 137px; }
  .size { width: 43px; margin-left: -1px; }
  .set {
    display: flex;
    box-sizing: border-box;
    height: 21px;
    border: 1px solid #9ebbe0;
    border-radius: 2px;
    background: #d3e1f3;
  }
  .set button {
    width: 22px;
    color: #222;
  }
  .set button + button {
    border-left: 1px solid #bcd0ea;
  }
  .set .wide { width: 24px; }
  .set .drop { width: 32px; gap: 4px; }
  .set .tight { width: 28px; gap: 2px; }
  .set .wider { width: 33px; }
  .set .on {
    background: linear-gradient(#fbc880, #fba648 45%, #fde08c);
  }
  .serif {
    font: bold 14px/16px 'Liberation Serif', serif;
  }
  .serif > svg:not(.arrow) {
    align-self: flex-start;
    margin-top: 3px;
  }
  .set .small { font-size: 12px; }
  .set .big { font-size: 18px; }
  .tserif { font-family: 'Liberation Serif', serif; }
  .serif sup,
  .serif sub {
    font-size: 8px;
    line-height: 10px;
    color: #2f57a6;
  }
  .serif sup { align-self: flex-start; }
  .serif sub { align-self: flex-end; }
  .set .pil { font-size: 16px; }

  .styles .body {
    padding: 4px 4px 4px 5px;
    gap: 4px;
  }
  .gallery {
    flex: 1;
    display: flex;
    min-width: 0;
    box-sizing: border-box;
    border: 1px solid #b4c9e6;
    background: #d4e4f7;
    overflow: hidden;
  }
  .card {
    flex: 1 1 72px;
    min-width: 0;
    flex-direction: column;
    box-sizing: border-box;
    border: 4px solid transparent;
    background: #fff padding-box;
    color: #111;
  }
  .card.picked {
    border: 3px solid #f2b93c;
    outline: 1px solid #b98a45;
    outline-offset: -1px;
  }
  .sample {
    height: 28px;
    max-width: 60px;
    line-height: 28px;
    overflow: hidden;
  }
  .card .name { color: #1b2a55; }
  .sans { font-size: 12px; }
  .h1, .h2, .h3, .title, .subtitle { font-family: 'Liberation Serif', serif; }
  .h1 { font-size: 20px; font-weight: 700; }
  .h2 { font-size: 16px; font-weight: 700; }
  .h3 { font-size: 16px; font-weight: 700; font-style: italic; }
  .h4 { font-size: 14px; font-weight: 700; }
  .title { font-size: 21px; font-weight: 700; }
  .subtitle { font-size: 16px; }
  .scroller {
    display: flex;
    flex-direction: column;
    width: 14px;
  }
  .scroller button {
    flex: 1;
    border: 1px solid #a9c3e6;
    background: #dbe9f9;
  }
  .scroller .off { background: #e4e8ee; }
  .change {
    width: 44px;
    flex-direction: column;
    line-height: 13px;
    gap: 2px;
  }
  .change .arrow,
  .stack .arrow {
    display: inline-block;
    vertical-align: middle;
  }

  .workspace {
    display: grid;
    grid-template-columns: 24px 1fr 16px;
  }
  .side {
    display: flex;
    flex-direction: column;
    background: #9dbbe4;
  }
  .corner {
    width: 24px;
    height: 24px;
    margin-top: 2px;
    border: 1px solid #6f92cc;
    background: #b6cdee;
  }
  .corner span {
    display: flex;
    align-items: center;
    justify-content: center;
    width: 13px;
    height: 13px;
    border: 1px solid #6384bc;
    background: #fff;
  }
  .vruler {
    display: flex;
    flex-direction: column;
    align-self: center;
    width: 14px;
    margin: auto 0 43px;
    font-size: 10px;
    color: #444;
  }
  .vruler span {
    writing-mode: vertical-rl;
    transform: rotate(180deg);
    line-height: 14px;
  }
  .vruler .edge {
    height: 13px;
    padding-bottom: 4px;
    border: 1px solid #d4e2f6;
    box-sizing: border-box;
    line-height: 12px;
  }
  .vruler .white {
    display: flex;
    flex-direction: column;
    justify-content: space-between;
    height: 98px;
    padding: 3px 0 7px;
    box-sizing: border-box;
    background: #fff;
  }
  .center {
    display: flex;
    flex-direction: column;
    background: #9ab9e2;
  }
  .hruler {
    display: flex;
    justify-content: flex-end;
    height: 26px;
    padding: 7px 43px 0 0;
    box-sizing: border-box;
  }
  .scale {
    position: relative;
    display: flex;
    width: 86px;
    height: 14px;
    font-size: 10px;
    line-height: 14px;
    color: #444;
    background: #b8cfee;
  }
  .scale .white {
    flex: 1;
    display: flex;
    justify-content: space-between;
    margin-left: 4px;
    padding: 0 4px 0 7px;
    background: #fff;
  }
  .markers {
    position: absolute;
    left: 0;
    top: -4px;
  }
  .document {
    position: relative;
    flex: 1;
    padding: 5px 21px 48px 19px;
    background: linear-gradient(#8fb2e2, #7c9fd3 25%, #567cb4 60%, #5079b6 75%, #6893d0);
  }
  .swirl {
    position: absolute;
    left: 0;
    top: 0;
  }
  .pages {
    position: relative;
    display: grid;
    grid-template-columns: repeat(auto-fill, 84px);
    justify-content: center;
    gap: 5px;
  }
  .page {
    width: 84px;
    height: 118px;
    background: #fff;
    box-shadow: 1px 1px 4px 2px #3c5576;
  }
  .ink {
    stroke: #bbb;
  }
  .text {
    stroke: #666;
    stroke-dasharray: 3 1 5 1 2 2 4 1 6 2 1 1;
  }
  .text.b { stroke: #111; }
  .ink.b { stroke: #777; }
  .ink.r { stroke: #000; }
  .squiggle {
    fill: none;
    stroke: #0a6a14;
    stroke-dasharray: 1 1;
  }

  .scrollbar {
    display: flex;
    flex-direction: column;
    align-items: center;
    padding: 5px 0 3px;
    background: #a8c3ea;
  }
  .split {
    width: 10px;
    height: 2px;
    background: #33507d;
  }
  .toggle {
    width: 16px;
    height: 19px;
  }
  .step {
    width: 15px;
    height: 16px;
    box-sizing: border-box;
    border: 1px solid #7f9ac4;
    background: #d8e4f5;
  }
  .thumb {
    flex: 1;
    display: flex;
    align-items: center;
    justify-content: center;
    width: 15px;
    box-sizing: border-box;
    border: 1px solid #7d9ed3;
    border-radius: 2px;
    background: linear-gradient(90deg, #e6f0fd, #c5daf7 50%, #a9c6f0);
  }
  .browse {
    width: 16px;
    height: 17px;
  }

  .status {
    display: flex;
    border-top: 1px solid #5d7cab;
    box-sizing: border-box;
    background: linear-gradient(#e3efff, #c4dcfd 35%, #a9ccfb 40%, #dbe9fc);
  }
  .cell {
    padding: 0 8px;
    border-right: 1px solid #9dbce6;
    color: #1e3a70;
  }
  .lang { gap: 16px; padding-right: 18px; }
  .right {
    display: flex;
    align-items: center;
    width: 281px;
    margin-left: auto;
    padding: 0 4px 0 6px;
    box-sizing: border-box;
    border-left: 1px solid #7f9fcc;
    background: linear-gradient(#b9d2f4, #93b6e6 50%, #a6c7f2);
  }
  .views {
    display: flex;
    height: 18px;
    border: 1px solid #8fabd3;
    box-sizing: border-box;
    background: #c9dcf5;
  }
  .views button { width: 18px; }
  .views .on { background: #fcc46c; }
  .percent {
    width: 40px;
    color: #1e3a70;
  }
  .round { width: 20px; }
  input[type='range'] {
    appearance: none;
    flex: 1;
    min-width: 0;
    height: 18px;
    margin: 0;
    background:
      linear-gradient(#e8f0fb, #e8f0fb) center / 1px 8px no-repeat,
      linear-gradient(#dfe9f7, #dfe9f7) center / 100% 1px no-repeat;
  }
  input[type='range']::-webkit-slider-thumb {
    appearance: none;
    width: 9px;
    height: 12px;
    border: 1px solid #5b7096;
    border-radius: 1px 1px 5px 5px;
    background: #e9eff8;
  }

  .taskbar {
    display: flex;
    background: #1b1b1b;
    color: #fff;
  }
  .start { width: 48px; }
  .search {
    display: flex;
    align-items: center;
    width: 344px;
    padding-left: 12px;
    box-sizing: border-box;
    background: #f2f2f2;
  }
  .search input {
    flex: 1;
    min-width: 0;
    padding: 0 0 0 10px;
    border: 0;
    outline: 0;
    background: none;
    font: 14px/20px 'Open Sans', sans-serif;
  }
  .search input::placeholder { color: #444; }
  .art { align-self: flex-end; }
  .app {
    width: 49px;
    border-bottom: 2px solid transparent;
    box-sizing: border-box;
  }
  .app.open {
    border-image: linear-gradient(90deg, transparent 5px, #b5b0ae 5px, #b5b0ae 44px, transparent 44px) 2;
    border-style: solid;
    border-width: 0 0 2px;
  }
  .app.current { background: #4a4a4a; }
  .tray {
    display: flex;
    align-items: center;
    gap: 9px;
    margin-left: auto;
    padding-right: 4px;
  }
  .tray button { height: 40px; }
  .weather {
    gap: 8px;
    margin-right: 8px;
    font-size: 14px;
  }
  .eng { font-size: 12px; }
  .clock {
    width: 58px;
    line-height: 18px;
    text-align: center;
  }
  .note {
    width: 44px;
    box-sizing: border-box;
    border-right: 1px solid #555;
  }
  .tray .note { padding-right: 12px; }
</style>
